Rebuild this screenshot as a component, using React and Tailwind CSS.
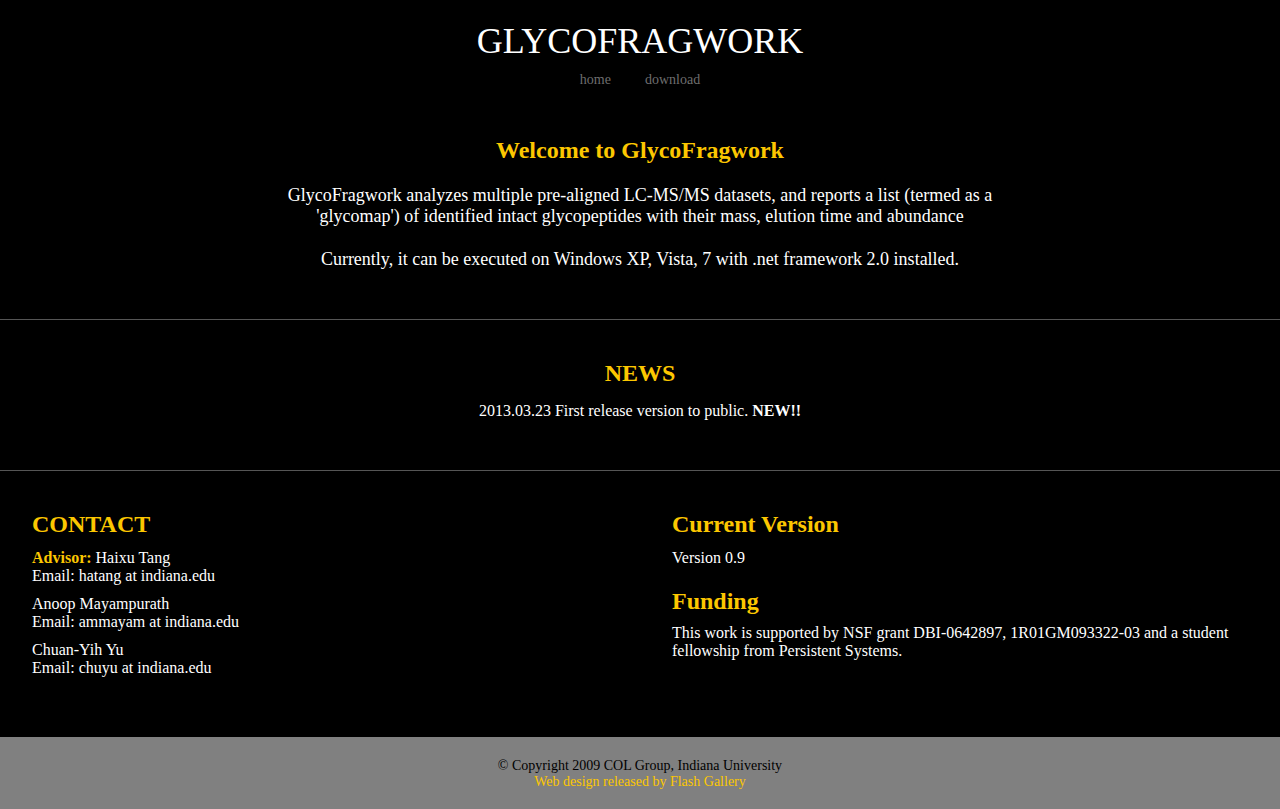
import React from "react";

const gold = "text-[#fcc700]";

const contacts = [
  { name: "Haixu Tang", email: "hatang at indiana.edu", advisor: true },
  { name: "Anoop Mayampurath", email: "ammayam at indiana.edu" },
  { name: "Chuan-Yih Yu", email: "chuyu at indiana.edu" },
];

export default function App() {
  return (
    <div className="min-h-screen bg-black text-white font-['Liberation_Serif','Times_New_Roman',serif] flex flex-col">
      {/* Header */}
      <header className="flex flex-col items-center pt-[21px]">
        <h1 className="text-[36px] leading-[40px] font-normal">GLYCOFRAGWORK</h1>
        <nav className="mt-[11px] flex gap-[34px] text-[14px] leading-[16px] text-[#6e6e6e]">
          <a href="#">home</a>
          <a href="#">download</a>
        </nav>
      </header>

      {/* Welcome */}
      <section className="max-w-[730px] w-full mx-auto text-center pt-[48px] pb-[49px]">
        <h2 className={`text-[24px] leading-[28px] font-bold ${gold}`}>Welcome to GlycoFragwork</h2>
        <p className="mt-[21px] text-[18px] leading-[21px]">
          GlycoFragwork analyzes multiple pre-aligned LC-MS/MS datasets, and reports a list (termed as a
          'glycomap') of identified intact glycopeptides with their mass, elution time and abundance
        </p>
        <p className="mt-[22px] text-[18px] leading-[21px]">
          Currently, it can be executed on Windows XP, Vista, 7 with .net framework 2.0 installed.
        </p>
      </section>

      {/* News */}
      <section className="border-t border-b border-[#555] text-center pt-[39px] pb-[50px]">
        <h2 className={`text-[24px] leading-[28px] font-bold ${gold}`}>NEWS</h2>
        <p className="mt-[15px] text-[16px] leading-[18px]">
          2013.03.23 First release version to public. <b>NEW!!</b>
        </p>
      </section>

      {/* Contact / version */}
      <section className="grid grid-cols-2 pt-[39px] pb-[60px] text-[16px] leading-[18px]">
        <div className="px-[32px]">
          <h2 className={`text-[24px] leading-[28px] font-bold ${gold}`}>CONTACT</h2>
          <div className="mt-[11px] flex flex-col gap-[10px]">
            {contacts.map((c) => (
              <div key={c.name}>
                {c.advisor && <b className={gold}>Advisor: </b>}
                {c.name}
                <br />
                Email: {c.email}
              </div>
            ))}
          </div>
        </div>
        <div className="px-[32px]">
          <h2 className={`text-[24px] leading-[28px] font-bold ${gold}`}>Current Version</h2>
          <p className="mt-[11px]">Version 0.9</p>
          <h2 className={`mt-[20px] text-[24px] leading-[28px] font-bold ${gold}`}>Funding</h2>
          <p className="mt-[9px]">
            This work is supported by NSF grant DBI-0642897, 1R01GM093322-03 and a student fellowship from
            Persistent Systems.
          </p>
        </div>
      </section>

      {/* Footer */}
      <footer className="bg-[#808080] text-center text-[14px] leading-[16px] pt-[21px] pb-[19px] text-black">
        <p>© Copyright 2009 COL Group, Indiana University</p>
        <a href="#" className={gold}>Web design released by Flash Gallery</a>
      </footer>
    </div>
  );
}
